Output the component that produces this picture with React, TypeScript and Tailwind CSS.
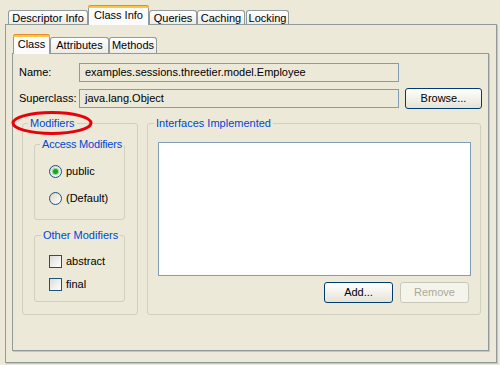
import React from 'react';

const Tab = ({ label, className, selected }: { label: string; className: string; selected?: boolean }) => {
  if (selected) {
    return (
      <div
        className={`relative z-10 -mb-px flex items-start justify-center rounded-t-[3px] border-x border-[#919B9C] bg-[#FCFCFE] ${className}`}
      >
        <div className="absolute inset-x-[-1px] top-0 h-[3px] rounded-t-[3px] border-t border-[#E68B2C] bg-[#FFC73C]" />
        <span className="mt-[4px]">{label}</span>
      </div>
    );
  }
  return (
    <div
      className={`flex items-start justify-center rounded-t-[3px] border-x border-t border-[#919B9C] bg-gradient-to-b from-white to-[#ECEBE6] ${className}`}
    >
      <span className="mt-[1px]">{label}</span>
    </div>
  );
};

const Group = ({
  title,
  className,
  legendClass,
  children,
}: {
  title: string;
  className: string;
  legendClass: string;
  children: React.ReactNode;
}) => (
  <fieldset className={`min-w-0 rounded-[3px] border border-[#D0D0BF] ${className}`}>
    <legend className={`whitespace-nowrap px-[2px] leading-[13px] text-[#0046D5] ${legendClass}`}>{title}</legend>
    {children}
  </fieldset>
);

const Radio = ({ label, checked }: { label: string; checked?: boolean }) => (
  <div className="flex h-[13px] items-center">
    <div className="flex h-[13px] w-[13px] items-center justify-center rounded-full border border-[#1C5180] bg-gradient-to-br from-[#DCD7CB] to-white">
      {checked && <div className="h-[5px] w-[5px] rounded-full bg-[#21A121] shadow-[0_0_0_1px_#8CD98C]" />}
    </div>
    <span className="ml-[4px]">{label}</span>
  </div>
);

const Check = ({ label }: { label: string }) => (
  <div className="flex h-[13px] items-center">
    <div className="h-[13px] w-[13px] border border-[#1C5180] bg-gradient-to-br from-[#DCDCD7] to-white" />
    <span className="ml-[4px]">{label}</span>
  </div>
);

export default function App() {
  return (
    <div className="relative h-[365px] w-[500px] overflow-hidden bg-[#ECE9D8] font-['Tahoma','Liberation_Sans',sans-serif] text-[11px] leading-[13px] text-black">
      {/* outer tabs */}
      <div className="flex h-[24px] items-end pl-[8px]">
        <Tab label="Descriptor Info" className="h-[14px] w-[80px]" />
        <Tab label="Class Info" className="h-[20px] w-[61px]" selected />
        <Tab label="Queries" className="h-[14px] w-[48px]" />
        <Tab label="Caching" className="h-[14px] w-[48px]" />
        <Tab label="Locking" className="ml-px h-[14px] w-[43px]" />
      </div>

      {/* outer panel */}
      <div className="ml-[5px] h-[339px] w-[492px] border border-[#919B9C] pl-[6px] shadow-[1px_1px_0_#C9C6B6]">
        {/* inner tabs */}
        <div className="flex h-[28px] items-end pl-[1px]">
          <Tab label="Class" className="h-[20px] w-[37px]" selected />
          <Tab label="Attributes" className="h-[16px] w-[59px]" />
          <Tab label="Methods" className="h-[16px] w-[48px]" />
        </div>

        {/* inner panel */}
        <div className="h-[298px] w-[477px] border border-[#919B9C] shadow-[1px_1px_0_#C9C6B6]">
          <div className="mt-[9px] flex items-center">
            <div className="w-[66px] pl-[6px]">Name:</div>
            <div className="flex h-[19px] w-[320px] items-center border border-[#7F9DB9] pl-[5px]">
              examples.sessions.threetier.model.Employee
            </div>
          </div>
          <div className="mt-[6px] flex h-[21px] items-center">
            <div className="w-[66px] pl-[6px]">Superclass:</div>
            <div className="flex h-[19px] w-[320px] items-center border border-[#7F9DB9] pl-[5px]">
              java.lang.Object
            </div>
            <button className="ml-[6px] h-[21px] w-[77px] rounded-[3px] border border-[#003C74] bg-gradient-to-b from-white to-[#E6E3D6]">
              Browse...
            </button>
          </div>

          <div className="mt-[8px] flex gap-[9px] pl-[9px]">
            <Group title="Modifiers" className="h-[198px] w-[116px]" legendClass="ml-[5px]">
              <div className="flex flex-col gap-[9px] pl-[11px] pt-[8px]">
                <Group title="Access Modifiers" className="h-[82px] w-[91px]" legendClass="ml-[5px] tracking-[-0.2px]">
                  <div className="flex flex-col gap-[14px] pl-[14px] pt-[14px]">
                    <Radio label="public" checked />
                    <Radio label="(Default)" />
                  </div>
                </Group>
                <Group title="Other Modifiers" className="h-[73px] w-[91px]" legendClass="ml-[6px]">
                  <div className="flex flex-col gap-[10px] pl-[14px] pt-[13px]">
                    <Check label="abstract" />
                    <Check label="final" />
                  </div>
                </Group>
              </div>
            </Group>

            <Group title="Interfaces Implemented" className="h-[198px] w-[334px]" legendClass="ml-[6px]">
              <div className="pl-[10px] pt-[12px]">
                <div className="h-[134px] w-[313px] border border-[#7F9DB9] bg-white" />
                <div className="mt-[6px] flex w-[313px] justify-end gap-[7px] pr-[2px]">
                  <button className="h-[21px] w-[69px] rounded-[3px] border border-[#003C74] bg-gradient-to-b from-white to-[#E6E3D6]">
                    Add...
                  </button>
                  <button className="h-[21px] w-[69px] rounded-[3px] border border-[#C9C7BA] bg-[#F5F4EA] text-[#ACA899]">
                    Remove
                  </button>
                </div>
              </div>
            </Group>
          </div>
        </div>
      </div>

      {/* red annotation circle around "Modifiers" */}
      <svg className="pointer-events-none absolute left-0 top-0" width="500" height="365">
        <ellipse cx="52" cy="123" rx="39" ry="10.5" fill="none" stroke="#E8000B" strokeWidth="3" />
      </svg>
    </div>
  );
}
